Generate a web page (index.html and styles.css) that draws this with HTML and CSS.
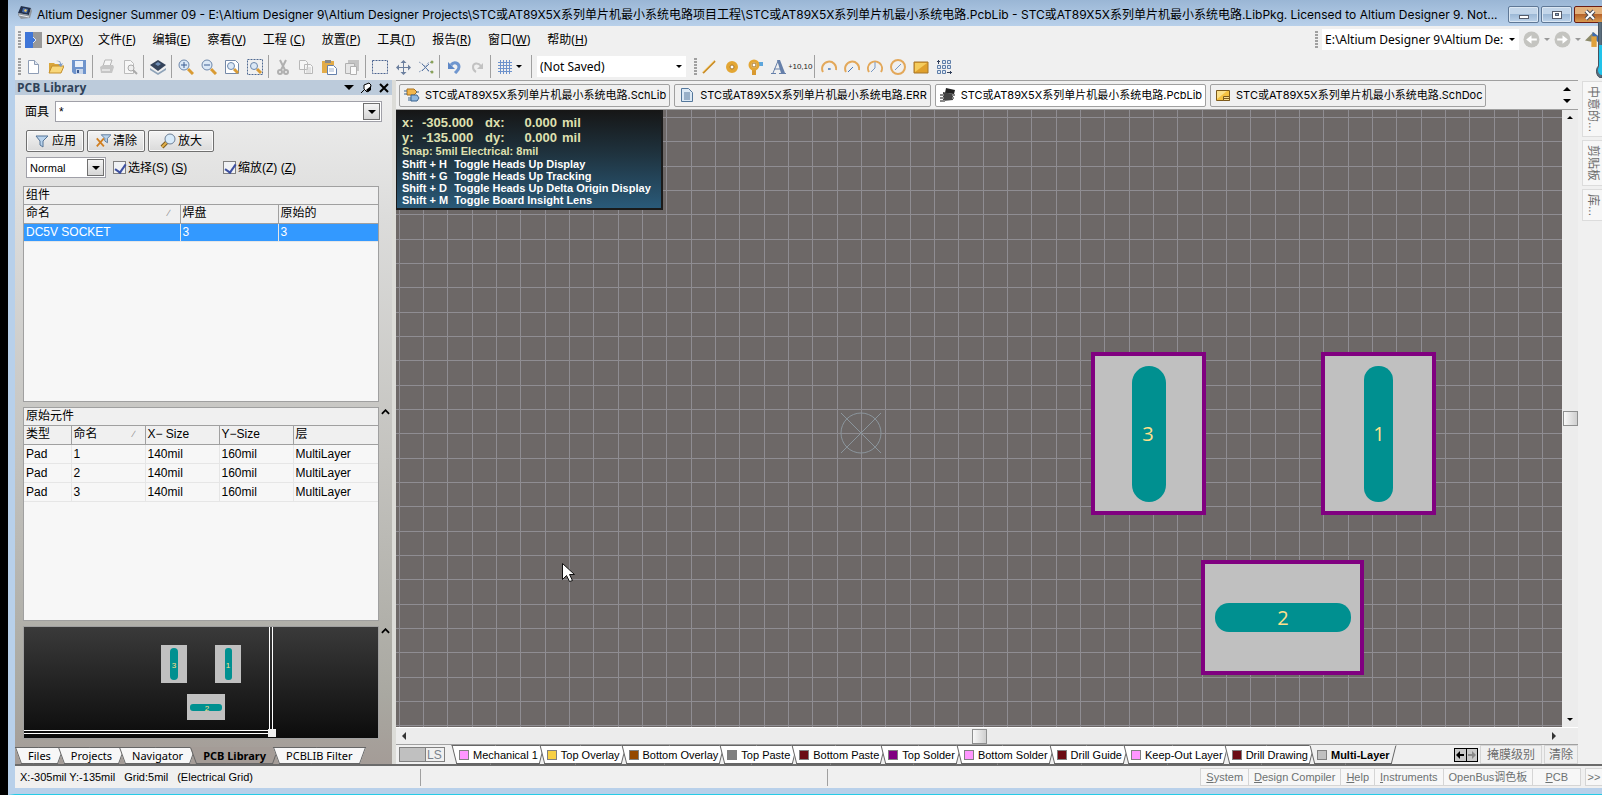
FILE: index.html
```html
<!DOCTYPE html>
<html lang="zh-CN">
<head>
  <meta charset="UTF-8">
  <title>Altium Designer Summer 09</title>
  <link rel="stylesheet" href="styles.css">
</head>
<body>
  <div class="window">
    <header class="titlebar">
      <svg class="app-icon" viewBox="0 0 16 16"><path d="M4 1l10 2-2 7-11-2z" fill="#23304a"/><path d="M6 3l5 1-1 4-5-1z" fill="#4a6fae"/><path d="M8 4l2 1-1 2-2-1z" fill="#f0c860"/><path d="M1 8l11 2 2-7 1 3-2 7-9 1-3-4z" fill="#8f959c"/><path d="M2 10l10 2" stroke="#e8ecf0"/></svg>
      <h1 class="title">Altium Designer Summer 09 - E:\Altium Designer 9\Altium Designer Projects\STC或AT89X5X系列单片机最小系统电路项目工程\STC或AT89X5X系列单片机最小系统电路.PcbLib - STC或AT89X5X系列单片机最小系统电路.LibPkg. Licensed to Altium Designer 9. Not...</h1>
      <div class="window-buttons">
        <button class="win-btn" aria-label="Minimize"><svg viewBox="0 0 16 12"><rect x="3.500" y="6.500" width="9" height="3" fill="#fff" stroke="#555c6b"/></svg></button>
        <button class="win-btn" aria-label="Maximize"><svg viewBox="0 0 16 12"><rect x="3.500" y="2.500" width="9" height="7" fill="#fff" stroke="#555c6b"/><rect x="6.500" y="4.500" width="3" height="2" fill="#8fabc9" stroke="#555c6b"/></svg></button>
        <button class="win-btn close" aria-label="Close"><svg viewBox="0 0 16 12"><path d="M4 2l8 8M12 2l-8 8" stroke="#4a4a55" stroke-width="4"/><path d="M4 2l8 8M12 2l-8 8" stroke="#fff" stroke-width="2"/></svg></button>
      </div>
    </header>

    <div class="menubar">
      <span class="grip"></span>
      <nav class="menu">
        <button class="dxp"><svg viewBox="0 0 17 16"><path d="M0 0h8v5l3 3-3 3v5H0z" fill="#3f76d8"/><path d="M8 0h9v16H8v-5l3-3-3-3z" fill="#999"/><path d="M8 5l3 3-3 3" fill="none" stroke="#dfe6f2"/></svg>DXP<span>(<u>X</u>)</span></button>
        <button>文件(<u>F</u>)</button>
        <button>编辑(<u>E</u>)</button>
        <button>察看(<u>V</u>)</button>
        <button>工程 (<u>C</u>)</button>
        <button>放置(<u>P</u>)</button>
        <button>工具(<u>T</u>)</button>
        <button>报告(<u>R</u>)</button>
        <button>窗口(<u>W</u>)</button>
        <button>帮助(<u>H</u>)</button>
      </nav>
      <div class="pathbar">
        <span class="grip"></span>
        <span class="combo path-combo"><select aria-label="Path"><option>E:\Altium Designer 9\Altium De:</option></select></span>
        <button class="nav-btn" aria-label="Back"><svg viewBox="0 0 16 16"><circle cx="8" cy="8" r="7.500" fill="#c4c4c0"/><path d="M3 8l5-4v3h5v2H8v3z" fill="#fff"/></svg></button>
        <span class="arrow dim"></span>
        <button class="nav-btn" aria-label="Forward"><svg viewBox="0 0 16 16"><circle cx="8" cy="8" r="7.500" fill="#c4c4c0"/><path d="M13 8L8 4v3H3v2h5v3z" fill="#fff"/></svg></button>
        <span class="arrow dim"></span>
        <button class="nav-btn" aria-label="Home"><svg viewBox="0 0 16 16"><path d="M0 9l8-8 3 3-5 6z" fill="#8c8a6a"/><path d="M7 1l9 6-3 4-6-5z" fill="#3c6bb0"/><path d="M6 5h5v10H6z" fill="#e0a23c"/></svg></button>
      </div>
    </div>

    <div class="toolbar">
      <span class="grip"></span>
      <button aria-label="New"><svg viewBox="0 0 16 16"><path d="M3.500 1.500h6l4 4v9h-10z" fill="#fff" stroke="#8e9db5"/><path d="M9.500 1.500v4h4" fill="#dfe7f2" stroke="#8e9db5"/></svg></button>
      <button aria-label="Open"><svg viewBox="0 0 16 16"><path d="M1 4h5l1 1h6v9H1z" fill="#d9a63c"/><path d="M4 7h12l-3 7H1z" fill="#f8d77a" stroke="#c48f2c"/><path d="M8 2c3-1 5 0 5 3l2-1-2 4-3-3h2c0-2-1-3-4-3" fill="#7d9bc4"/></svg></button>
      <button aria-label="Save"><svg viewBox="0 0 16 16"><path d="M1 1h14v14H3l-2-2z" fill="#6f94cc"/><path d="M4 2h8v6H4z" fill="#e9f0fa"/><path d="M5 10h7v5H5z" fill="#c7d5ea"/><path d="M6 11h2v3H6z" fill="#3c5c94"/></svg></button>
      <span class="sep"></span>
      <button aria-label="Print"><svg viewBox="0 0 16 16"><path d="M6 1h7l-2 6H4z" fill="#f6f6f6" stroke="#b5b5b5"/><path d="M1 8l3-2h10l1 2-2 6H2z" fill="#c6c6c6"/><path d="M3 11h8" stroke="#fff"/></svg></button>
      <button aria-label="Print preview"><svg viewBox="0 0 16 16"><path d="M2.500 1.500h6l3 3v10h-9z" fill="#f7f7f7" stroke="#bbb"/><circle cx="9" cy="9" r="3" fill="#eee" stroke="#aaa"/><path d="M11 11l4 4" stroke="#aaa" stroke-width="2"/></svg></button>
      <span class="sep"></span>
      <button aria-label="Board"><svg viewBox="0 0 16 16"><path d="M0 9l8 5 8-5v2l-8 5-8-5z" fill="#8fa3b8"/><path d="M0 6l8-5 8 5-8 6z" fill="#34435a"/><path d="M5 5l3-2 3 2-3 2z" fill="#6f8db4"/></svg></button>
      <span class="sep"></span>
      <button aria-label="Zoom in"><svg viewBox="0 0 16 16"><path d="M10 10l5 5" stroke="#d99b34" stroke-width="3"/><circle cx="6" cy="6" r="5" fill="#dbe8f6" stroke="#6d87ab"/><path d="M3 6h6M6 3v6" stroke="#3d5f93" stroke-width="1"/></svg></button>
      <button aria-label="Zoom out"><svg viewBox="0 0 16 16"><path d="M10 10l5 5" stroke="#d99b34" stroke-width="3"/><circle cx="6" cy="6" r="5" fill="#dbe8f6" stroke="#6d87ab"/><path d="M3 6h6" stroke="#3d5f93"/></svg></button>
      <button aria-label="Fit document"><svg viewBox="0 0 16 16"><path d="M1.500 1.500h10l3 3v10h-13z" fill="#fff" stroke="#7489a8"/><path d="M10 10l4 4" stroke="#d99b34" stroke-width="3"/><circle cx="7" cy="7" r="3.500" fill="#dbe8f6" stroke="#6d87ab"/></svg></button>
      <button aria-label="Fit area"><svg viewBox="0 0 16 16"><path d="M.5.5h15v15H.5z" fill="none" stroke="#506a92" stroke-dasharray="2 1"/><path d="M10 10l4 4" stroke="#d99b34" stroke-width="3"/><circle cx="7" cy="7" r="3.500" fill="#dbe8f6" stroke="#6d87ab"/></svg></button>
      <span class="sep"></span>
      <button aria-label="Cut"><svg viewBox="0 0 16 16"><path d="M5 1l5 10M11 1L6 11" stroke="#b0b0b0" stroke-width="2"/><circle cx="5" cy="13" r="2" fill="none" stroke="#b0b0b0" stroke-width="2"/><circle cx="11" cy="13" r="2" fill="none" stroke="#b0b0b0" stroke-width="2"/></svg></button>
      <button aria-label="Copy"><svg viewBox="0 0 16 16"><path d="M1.500 1.500h6l2 2v7h-8zM6.500 5.500h6l2 2v7h-8z" fill="#f6f6f6" stroke="#b8b8b8"/><path d="M8 9h5M8 11h5M8 13h5" stroke="#ccc"/></svg></button>
      <button aria-label="Paste"><svg viewBox="0 0 16 16"><path d="M1 2h12v12H1z" fill="#e3ac48"/><path d="M4 1h6v3H4z" fill="#8a8a8a"/><path d="M6.500 6.500h6l3 3v6h-9z" fill="#fff" stroke="#6580ab"/><path d="M8 10h5M8 12h5" stroke="#9fb2cf"/></svg></button>
      <button aria-label="Paste special"><svg viewBox="0 0 16 16"><path d="M4 1h11v11H4z" fill="#c4c4c4"/><path d="M1.500 4.500h9v10h-9z" fill="#e6e6e6" stroke="#b0b0b0"/><path d="M6.500 7.500h6v8h-6z" fill="#fafafa" stroke="#b0b0b0"/></svg></button>
      <span class="sep"></span>
      <button aria-label="Select"><svg viewBox="0 0 16 16"><path d="M.5 1.500h15v13H.5z" fill="none" stroke="#4c6490" stroke-dasharray="2 1"/></svg></button>
      <button aria-label="Move"><svg viewBox="0 0 16 16"><path d="M8.500 2v13M2 8.500h13" stroke="#6b7f9e"/><path d="M8.500 1l3 3h-6zM8.500 16l3-3h-6zM1 8.500l3-3v6zM16 8.500l-3-3v6z" fill="#6b7f9e"/></svg></button>
      <button aria-label="Deselect"><svg viewBox="0 0 16 16"><path d="M1 3l5 3 4 6 5 1M1 13l5-3 4-6 5-1" fill="none" stroke="#92a3bd" stroke-dasharray="2 1"/><path d="M4 5l7 7M11 5l-7 7" stroke="#607ba6"/><circle cx="14" cy="3" r="1.500" fill="#8aa25a"/><circle cx="14" cy="13" r="1.500" fill="#8aa25a"/></svg></button>
      <span class="sep"></span>
      <button aria-label="Undo"><svg viewBox="0 0 16 16"><path d="M5 6c3-4 8-2 8 2 0 3-2 4-4 6" fill="none" stroke="#6f96cf" stroke-width="3"/><path d="M2 3v7h7z" fill="#5d87c6"/></svg></button>
      <button aria-label="Redo"><svg viewBox="0 0 16 16"><path d="M12 7C9 3 4 4 4 8c0 3 1 4 3 5" fill="none" stroke="#c2c2c2" stroke-width="2"/><path d="M14 4v6H8z" fill="#c2c2c2"/></svg></button>
      <span class="sep"></span>
      <button aria-label="Grid"><svg viewBox="0 0 16 16"><path d="M3.500 1v14M6.500 1v14M9.500 1v14M12.500 1v14M1 3.500h14M1 6.500h14M1 9.500h14M1 12.500h14" stroke="#6d92cc"/></svg></button>
      <span class="arrow"></span>
      <span class="sep wide"></span>
      <span class="combo variant-combo"><select aria-label="Variant"><option>(Not Saved)</option></select></span>
      <span class="grip"></span>
      <button aria-label="Line"><svg viewBox="0 0 16 16"><path d="M2 14L14 2" stroke="#c88b28" stroke-width="2"/><path d="M2 13L13 2" stroke="#f3c765"/></svg></button>
      <button aria-label="Pad"><svg viewBox="0 0 16 16"><circle cx="8" cy="8" r="4" fill="#fff" stroke="#e3a634" stroke-width="4"/><circle cx="8" cy="8" r="2" fill="#fff" stroke="#a87420"/></svg></button>
      <button aria-label="Via"><svg viewBox="0 0 16 16"><path d="M10 3h6v4h-6z" fill="#5da6dc"/><path d="M5 9h4v7H5z" fill="#d89930"/><circle cx="7" cy="6" r="4" fill="#fff" stroke="#e3a634" stroke-width="3"/><circle cx="7" cy="6" r="2" fill="none" stroke="#a87420"/></svg></button>
      <button aria-label="String"><svg viewBox="0 0 16 16"><path d="M1 14.500h5M9 14.500h7M3 14L8 2M4 10h6" stroke="#6680aa" stroke-width="1" fill="none"/><path d="M7 1h3l5 13h-4z" fill="#6680aa"/></svg></button>
      <button class="coord" aria-label="Coordinate"><sub>+</sub>10,10</button>
      <span class="sep"></span>
      <button aria-label="Arc by centre"><svg viewBox="0 0 16 16"><path d="M2 13A7 7 0 1 1 15 11" fill="none" stroke="#e3a85a" stroke-width="2"/><path d="M7 10h3M8 9v2" stroke="#4577b8"/></svg></button>
      <button aria-label="Arc by edge"><svg viewBox="0 0 16 16"><path d="M2 13A7 7 0 1 1 15 11" fill="none" stroke="#e3a85a" stroke-width="2"/><path d="M4 13l5-5" stroke="#4577b8"/></svg></button>
      <button aria-label="Arc any angle"><svg viewBox="0 0 16 16"><path d="M2 13A7 7 0 1 1 14 13" fill="none" stroke="#e3a85a" stroke-width="2"/><path d="M8 3v6l-4 4" fill="none" stroke="#7798c4"/></svg></button>
      <button aria-label="Full circle"><svg viewBox="0 0 16 16"><circle cx="8" cy="8" r="7" fill="none" stroke="#e3a85a" stroke-width="2"/><path d="M5 11l6-6" stroke="#7798c4"/></svg></button>
      <button aria-label="Fill"><svg viewBox="0 0 16 16"><path d="M1 3h14v11H1z" fill="#e0a02c" stroke="#a6762a"/><path d="M2 4h12L2 13z" fill="#f5cc5c"/></svg></button>
      <button aria-label="Array"><svg viewBox="0 0 16 16"><path d="M6.500 1.500h3v3h-3zM11.500 1.500h3v3h-3zM6.500 6.500h3v3h-3zM11.500 6.500h3v3h-3zM1.500 11.500h3v3h-3zM6.500 11.500h3v3h-3zM1.500 6.500h3v3h-3z" fill="#dfe9f5" stroke="#5f7ea9"/><path d="M2.500 5V1M1 2.500h3M11 13.500h5M14.500 12v3" stroke="#33415c"/></svg></button>
    </div>

    <div class="workspace">
      <aside class="panel">
        <div class="panel-title">
          <h2>PCB Library</h2>
          <span class="arrow big"></span>
          <button aria-label="Pin"><svg viewBox="0 0 12 12"><path d="M1 11l4-4" stroke="#000"/><path d="M4 3l5-2 2 2-1 5-3 2-3-3z" fill="#fff" stroke="#000"/><path d="M6 8l5-4v4l-3 2z"/></svg></button>
          <button aria-label="Close panel"><svg viewBox="0 0 12 12"><path d="M2 2l8 8M10 2l-8 8" stroke="#000" stroke-width="2"/></svg></button>
        </div>
        <div class="panel-body">
          <div class="mask-row">
            <label for="mask">面具</label>
            <span class="mask-box"><input id="mask" type="text" value="*"><button class="drop" aria-label="Mask history"><span class="arrow"></span></button></span>
          </div>
          <div class="button-row">
            <button class="push"><svg viewBox="0 0 16 16"><path d="M2 3h12l-5 5v6l-3-2V8z" fill="#b9d3ec" stroke="#557497"/></svg>应用</button>
            <button class="push clear"><svg viewBox="0 0 18 16"><path d="M7 1h11l-4 4v5l-3-2V5z" fill="#b9d3ec" stroke="#557497"/><path d="M2 5l8 9M10 5l-8 9" stroke="#d07f22" stroke-width="2"/></svg>清除</button>
            <button class="push magnify"><svg viewBox="0 0 16 16"><path d="M7 9l-5 5" stroke="#7d5c22" stroke-width="4"/><path d="M7 9l-5 5" stroke="#e2b04a" stroke-width="2"/><circle cx="10" cy="6" r="5" fill="#d8ebfa" stroke="#6d7f96"/></svg>放大</button>
          </div>
          <div class="option-row">
            <span class="mode-box"><select aria-label="Mode"><option>Normal</option></select><span class="drop"><span class="arrow"></span></span></span>
            <label class="check"><input type="checkbox" checked>选择(S) (<u>S</u>)</label>
            <label class="check"><input type="checkbox" checked>缩放(Z) (<u>Z</u>)</label>
          </div>

          <div class="list">
            <table class="components">
              <caption>组件</caption>
              <thead><tr><th class="sorted">命名</th><th>焊盘</th><th>原始的</th></tr></thead>
              <tbody><tr class="selected"><td>DC5V SOCKET</td><td>3</td><td>3</td></tr></tbody>
            </table>
          </div>

          <div class="list-row">
            <div class="list">
              <table class="primitives">
                <caption>原始元件</caption>
                <thead><tr><th>类型</th><th class="sorted">命名</th><th>X− Size</th><th>Y−Size</th><th>层</th></tr></thead>
                <tbody>
                  <tr><td>Pad</td><td>1</td><td>140mil</td><td>160mil</td><td>MultiLayer</td></tr>
                  <tr><td>Pad</td><td>2</td><td>140mil</td><td>160mil</td><td>MultiLayer</td></tr>
                  <tr><td>Pad</td><td>3</td><td>140mil</td><td>160mil</td><td>MultiLayer</td></tr>
                </tbody>
              </table>
            </div>
            <button class="collapse" aria-label="Collapse"><svg viewBox="0 0 10 6"><path d="M1 5l4-4 4 4" fill="none" stroke="#000" stroke-width="2"/></svg></button>
          </div>

          <div class="preview-row">
            <svg class="preview" viewBox="0 0 354 111" preserveAspectRatio="none">
              <g fill="#c0c0c0"><rect x="137" y="18" width="26" height="38"/><rect x="191" y="18" width="26" height="38"/><rect x="163" y="67" width="38" height="26"/></g>
              <g fill="#009090"><rect x="146" y="21" width="8" height="32" rx="4"/><rect x="201" y="21" width="7" height="32" rx="3"/><rect x="166" y="77" width="32" height="7" rx="3"/></g>
              <g class="preview-num"><text x="150" y="41">3</text><text x="204" y="41">1</text><text x="183" y="84">2</text></g>
              <path d="M245.500 0v106M248.500 0v106M0 103.500h246M0 106.500h246" stroke="#fff"/>
              <rect x="244" y="102" width="8" height="8" fill="#f0f0f0"/>
            </svg>
            <button class="collapse" aria-label="Collapse"><svg viewBox="0 0 10 6"><path d="M1 5l4-4 4 4" fill="none" stroke="#000" stroke-width="2"/></svg></button>
          </div>
        </div>
        <div class="panel-tabs">
          <button class="slant">Files</button>
          <button class="slant">Projects</button>
          <button class="slant">Navigator</button>
          <button class="slant active">PCB Library</button>
          <button class="slant">PCBLIB Filter</button>
        </div>
      </aside>

      <main class="editor">
        <div class="doc-tabs">
          <button class="doc-tab"><svg viewBox="0 0 16 16"><path d="M3 2h7l3 3-3 3H3z" fill="#f1b64c" stroke="#a8701c"/><path d="M7 8h6l2 3-2 3H7z" fill="#8fb8e0" stroke="#3b648f"/><path d="M0 4h3M0 7h3M12 5h3M4 11h3M4 13h3" stroke="#3b648f"/></svg>STC或AT89X5X系列单片机最小系统电路.SchLib</button>
          <button class="doc-tab"><svg viewBox="0 0 16 16"><path d="M2.500 1.500h7l4 4v9h-11z" fill="#dce9f5" stroke="#54779b"/><path d="M5 6h6M5 8h6M5 10h6M5 12h6" stroke="#54779b"/></svg>STC或AT89X5X系列单片机最小系统电路.ERR</button>
          <button class="doc-tab active"><svg viewBox="0 0 16 16"><path d="M6 1l9 2-1 4-9-1z" fill="#222"/><path d="M3 5l10 2v6l-10 1z" fill="#444"/><path d="M0 8h4M0 11h4M0 14h5M12 8h3M12 11h2" stroke="#888" stroke-width="2"/></svg>STC或AT89X5X系列单片机最小系统电路.PcbLib</button>
          <button class="doc-tab"><svg viewBox="0 0 16 16"><path d="M1.500 3.500h13v10h-13z" fill="#f5c243" stroke="#7c5a1c"/><path d="M2 4h10L2 12z" fill="#fbe08a"/><path d="M8.500 9.500h6v4h-6zM8.500 11.500h6" fill="#f8dc90" stroke="#7c5a1c"/></svg>STC或AT89X5X系列单片机最小系统电路.SchDoc</button>
          <div class="tab-scroll"><span class="arrow up"></span><span class="arrow big"></span></div>
        </div>

        <div class="canvas-area">
          <div class="canvas">
            <svg class="board" aria-label="PCB footprint">
              <defs>
                <pattern id="grid" x="3" y="7" width="73" height="73" patternUnits="userSpaceOnUse">
                  <path d="M.5 0v73M24.500 0v73M48.500 0v73M0 .5h73M0 24.500h73M0 49.500h73" stroke="#8f8d92"/>
                </pattern>
              </defs>
              <rect width="100%" height="100%" fill="url(#grid)"/>
              <g fill="none" stroke="#8b959c"><circle cx="465" cy="323" r="20"/><path d="M445 303l40 40M485 303l-40 40"/></g>
              <g class="pads">
                <rect x="697" y="244" width="111" height="159"/>
                <rect x="927" y="244" width="111" height="159"/>
                <rect x="807" y="452" width="159" height="111"/>
              </g>
              <g fill="#009090">
                <rect x="736" y="256" width="34" height="136" rx="17"/>
                <rect x="968" y="256" width="29" height="136" rx="14"/>
                <rect x="819" y="493" width="136" height="29" rx="14"/>
              </g>
              <g class="pad-num"><text x="752" y="331">3</text><text x="983" y="331">1</text><text x="887" y="515">2</text></g>
              <path d="M166.500 453.500v16l4-4 3 6 3-1-3-6h5z" fill="#fff" stroke="#111"/>
            </svg>
            <div class="hud">
              <div class="hud-pos">
                <span>x:</span><span>-305.000</span><span>dx:</span><span class="num">0.000</span><span>mil</span>
                <span>y:</span><span>-135.000</span><span>dy:</span><span class="num">0.000</span><span>mil</span>
              </div>
              <div class="hud-snap">Snap: 5mil Electrical: 8mil</div>
              <div class="hud-keys">
                <span>Shift + H</span><span>Toggle Heads Up Display</span>
                <span>Shift + G</span><span>Toggle Heads Up Tracking</span>
                <span>Shift + D</span><span>Toggle Heads Up Delta Origin Display</span>
                <span>Shift + M</span><span>Toggle Board Insight Lens</span>
              </div>
            </div>
          </div>
          <div class="vscroll"><span class="arrow up small"></span><span class="thumb"></span><span class="arrow small"></span></div>
        </div>
        <div class="hscroll"><span class="arrow left"></span><span class="thumb"></span><span class="arrow right"></span></div>

        <div class="layers">
          <div class="layer-set"><span class="ls-swatch"></span><span>LS</span></div>
          <div class="layer-tabs">
            <button class="slant"><i class="pink"></i>Mechanical 1</button>
            <button class="slant"><i class="yellow"></i>Top Overlay</button>
            <button class="slant"><i class="brown"></i>Bottom Overlay</button>
            <button class="slant"><i class="gray"></i>Top Paste</button>
            <button class="slant"><i class="maroon"></i>Bottom Paste</button>
            <button class="slant"><i class="purple"></i>Top Solder</button>
            <button class="slant"><i class="pink"></i>Bottom Solder</button>
            <button class="slant"><i class="maroon"></i>Drill Guide</button>
            <button class="slant"><i class="pink"></i>Keep-Out Layer</button>
            <button class="slant"><i class="maroon"></i>Drill Drawing</button>
            <button class="slant active"><i class="silver"></i>Multi-Layer</button>
          </div>
          <div class="layer-tools">
            <span class="layer-move"><button aria-label="Previous layers"><svg viewBox="0 0 10 10"><path d="M1 5l4-4v3h4v2H5v3z"/></svg></button><button aria-label="Next layers"><svg viewBox="0 0 10 10"><path d="M9 5L5 1v3H1v2h4v3z" fill="#888"/></svg></button></span>
            <button class="flat">掩膜级别</button>
            <button class="flat">清除</button>
          </div>
        </div>
      </main>

      <aside class="side-dock">
        <button>中意的...</button>
        <button>剪贴板</button>
        <button>库...</button>
      </aside>
    </div>

    <footer class="statusbar">
      <div class="status-text"><span>X:-305mil Y:-135mil</span><span>Grid:5mil</span><span>(Electrical Grid)</span></div>
      <div class="status-fill"></div>
      <div class="status-buttons">
        <button><u>S</u>ystem</button>
        <button><u>D</u>esign Compiler</button>
        <button><u>H</u>elp</button>
        <button><u>I</u>nstruments</button>
        <button>OpenBus调色板</button>
        <button><u>P</u>CB</button>
      </div>
      <button class="more">&gt;&gt;</button>
    </footer>
  </div>
  <svg class="edge-widget" viewBox="0 0 6 56"><path d="M2.500 0H6v56c-6 0-7-9-3.500-12z" fill="#5b6f7e" stroke="#46525e"/><path d="M3 23h3v30c-4 0-5-6-3-8z" fill="#22c3ea"/></svg>
</body>
</html>
```
FILE: styles.css
```css
* {
  box-sizing: border-box;
}

body {
  margin: 0;
  background: #000;
  color: #000;
  font-family: "Liberation Sans", "Noto Sans CJK SC", sans-serif;
  font-size: 12px;
  line-height: 16px;
  overflow: hidden;
}

button,
input,
select {
  font: inherit;
  color: inherit;
  margin: 0;
  padding: 0;
  border: 0;
  border-radius: 0;
  background: none;
}

button {
  display: flex;
  align-items: center;
  justify-content: center;
  white-space: nowrap;
  flex-shrink: 0;
}

svg {
  display: block;
  flex-shrink: 0;
}

.window {
  display: flex;
  flex-direction: column;
  height: 100vh;
  margin-left: 8px;
  background: #f0f0f0;
  border-left: 7px solid #b8d0ea;
  border-bottom: 1px solid #26cbe6;
}

/* title bar */

.titlebar {
  display: flex;
  align-items: center;
  height: 26px;
  margin-left: -7px;
  padding-left: 9px;
  background: linear-gradient(#9ab6d5, #b8d0ea);
}

.app-icon {
  width: 16px;
  height: 16px;
}

.title {
  flex: 1;
  min-width: 0;
  margin: 3px 0 0 4px;
  font-family: Inter, "Noto Sans CJK SC", sans-serif;
  font-size: 12px;
  font-weight: 400;
  white-space: nowrap;
  overflow: hidden;
}

.window-buttons {
  display: flex;
  gap: 2px;
  width: 94px;
  margin-top: 3px;
  overflow: hidden;
}

.win-btn {
  width: 31px;
  height: 17px;
  border: 1px solid #5f7896;
  border-radius: 2px;
  background: linear-gradient(#c3d6ea 45%, #9db9d6 50%, #bdd3ea);
  box-shadow: inset 0 0 0 1px #dbe7f3;
}

.win-btn svg {
  width: 16px;
  height: 12px;
}

.win-btn.close {
  border-color: #6b1c14;
  background: linear-gradient(#e3b17c 45%, #b5632a 50%, #d89a50);
  box-shadow: none;
}

/* menu */

.menubar {
  display: flex;
  align-items: center;
  height: 27px;
  padding-left: 3px;
  font-family: "Noto Sans", "Noto Sans CJK SC", sans-serif;
}

.grip {
  width: 3px;
  height: 18px;
  flex-shrink: 0;
  background: repeating-linear-gradient(#a0a0a0 0 2px, transparent 2px 3px);
}

.menu {
  display: flex;
  flex: 1;
  gap: 17px;
  padding-left: 4px;
}

.menu .dxp {
  margin-right: -2px;
}

.dxp svg {
  width: 17px;
  height: 16px;
  margin-right: 4px;
}

.pathbar {
  display: flex;
  align-items: center;
  width: 287px;
  gap: 4px;
  overflow: hidden;
}

.combo {
  display: flex;
  align-items: center;
  position: relative;
  height: 21px;
  background: #fff;
}

.combo select {
  width: 100%;
  height: 100%;
  padding-left: 3px;
  appearance: none;
}

.combo::after {
  content: "";
  position: absolute;
  right: 4px;
  border: 3px solid transparent;
  border-top-color: #000;
  border-bottom: 0;
}

.path-combo {
  width: 197px;
}

.arrow {
  width: 0;
  flex-shrink: 0;
  border: 3px solid transparent;
  border-top-color: #000;
  border-bottom: 0;
}

.arrow.dim {
  border-top-color: #999;
}

.arrow.big {
  border-width: 5px 5px 0;
}

.arrow.up {
  border: 4px solid transparent;
  border-bottom-color: #000;
  border-top: 0;
}

.arrow.left {
  border: 4px solid transparent;
  border-right-color: #333;
  border-left: 0;
}

.arrow.right {
  border: 4px solid transparent;
  border-left-color: #333;
  border-right: 0;
}

.nav-btn svg {
  width: 17px;
  height: 17px;
}

/* toolbar */

.toolbar {
  display: flex;
  align-items: center;
  height: 27px;
  padding-left: 3px;
  font-family: "Noto Sans", "Noto Sans CJK SC", sans-serif;
}

.toolbar button {
  width: 23px;
  height: 22px;
}

.toolbar svg {
  width: 16px;
  height: 16px;
}

.toolbar .coord {
  font-family: "Liberation Sans", sans-serif;
  font-size: 8px;
  color: #222;
}

.sep {
  width: 1px;
  height: 23px;
  margin: 0 2px;
  background: #a0a0a0;
}

.sep.wide {
  margin-left: 9px;
  margin-right: 4px;
}

.variant-combo {
  width: 149px;
  margin: 0 8px 0 1px;
}

/* workspace */

.workspace {
  display: flex;
  flex: 1;
  min-height: 0;
}

.panel {
  display: flex;
  flex-direction: column;
  width: 381px;
  border-right: 4px solid #dcdcd8;
  background: linear-gradient(#f0f0f0, #dcdcdb 20%, #c4c3bf 55%, #a9a8a1 90%, #a49c97);
}

.panel-title {
  display: flex;
  align-items: center;
  gap: 6px;
  height: 15px;
  padding: 0 2px;
  background: #bccbdb;
}

.panel-title h2 {
  flex: 1;
  margin: 0;
  font-family: "Open Sans", sans-serif;
  font-size: 12px;
  color: #2f4258;
}

.panel-title svg {
  width: 12px;
  height: 12px;
}

.panel-body {
  display: flex;
  flex-direction: column;
  flex: 1;
  min-height: 0;
  padding: 6px 0 8px 8px;
}

.mask-row {
  display: flex;
  align-items: center;
  gap: 6px;
  padding: 0 10px 0 2px;
}

.mask-box {
  display: flex;
  flex: 1;
  height: 21px;
  padding: 1px;
  border: 1px solid #a0a0a8;
  background: #fff;
}

.mask-box input {
  flex: 1;
  padding-left: 2px;
}

.drop {
  display: flex;
  align-items: center;
  justify-content: center;
  width: 17px;
  border: 1px solid #707070;
  background: linear-gradient(#f5f5f5, #d6d6d6);
}

.drop .arrow {
  border-width: 4px 4px 0;
}

.button-row {
  display: flex;
  gap: 3px;
  margin: 8px 0 5px 3px;
}

.push {
  gap: 2px;
  width: 58px;
  height: 22px;
  border: 1px solid #707070;
  border-radius: 2px;
  background: linear-gradient(#f4f4f4, #dadada);
  box-shadow: inset 0 0 0 1px #fafafa;
}

.push svg {
  width: 16px;
  height: 16px;
}

.push.magnify {
  width: 66px;
}

.option-row {
  display: flex;
  align-items: center;
  padding-left: 3px;
}

.mode-box {
  display: flex;
  position: relative;
  width: 80px;
  height: 21px;
  margin-right: 7px;
  padding: 1px;
  border: 1px solid #a0a0a8;
  background: #fff;
  font-size: 11px;
}

.mode-box select {
  flex: 1;
  padding-left: 2px;
  appearance: none;
}

.check {
  display: flex;
  align-items: center;
  white-space: nowrap;
  width: 110px;
}

.check input {
  position: relative;
  width: 13px;
  height: 13px;
  margin-right: 2px;
  border: 1px solid #808080;
  background: #f0f2f5;
  appearance: none;
}

.check input:checked::after {
  content: "";
  position: absolute;
  left: 3px;
  top: 0;
  width: 5px;
  height: 9px;
  border: solid #3c4fa0;
  border-width: 0 2px 2px 0;
  transform: rotate(35deg);
}

.list {
  flex: 1;
  border: 1px solid #a0a0a0;
  background: #f7f7f7;
}

.option-row + .list {
  flex: 1 1 0;
  margin: 8px 13px 5px 0;
}

.list-row {
  display: flex;
  flex: 1 1 0;
}

.collapse {
  align-self: flex-start;
  width: 13px;
  height: 10px;
}

.collapse svg {
  width: 9px;
  height: 6px;
}

table {
  width: 100%;
  table-layout: fixed;
  border-collapse: collapse;
}

caption,
th {
  height: 18px;
  padding: 0 2px;
  text-align: left;
  font-weight: 400;
  line-height: 17px;
  background: #f0f0f0;
  border-bottom: 1px solid #a0a0a0;
  white-space: nowrap;
}

th + th {
  border-left: 1px solid #a0a0a0;
}

td {
  height: 19px;
  padding: 0 2px;
  border-bottom: 1px solid #e6e6e6;
}

td + td {
  border-left: 1px solid #e6e6e6;
}

.selected td {
  height: 18px;
  color: #fff;
  background: #3399ff;
}

.components th:nth-child(1) {
  width: 156px;
}

.components th:nth-child(2) {
  width: 98px;
}

.primitives th {
  width: 74px;
}

.primitives th:nth-child(1) {
  width: 47px;
}

.primitives th:nth-child(5) {
  width: auto;
}

.sorted::after {
  content: "∕";
  float: right;
  margin-right: 8px;
  font-size: 9px;
  color: #888;
}

.preview-row {
  display: flex;
  height: 113px;
  margin-top: 5px;
}

.preview {
  flex: 1;
  border: 1px solid #a0a0a0;
  background: linear-gradient(#3a3a3a, #0c0c0c);
}

.preview-num {
  fill: #ffe08c;
  font-size: 8px;
  text-anchor: middle;
}

/* slanted tabs, wider at the top */

.slant {
  position: relative;
  z-index: 0;
}

.slant::before,
.slant::after {
  content: "";
  position: absolute;
  z-index: -1;
  top: 0;
  bottom: 0;
  width: 55%;
  background: #f7f7f7;
  border: 1px solid #666;
}

.slant::before {
  left: 0;
  border-right: 0;
  transform: skewX(14deg);
}

.slant::after {
  right: 0;
  border-left: 0;
  transform: skewX(-14deg);
}

.panel-tabs {
  display: flex;
  height: 17px;
  padding-left: 3px;
  font-family: "Noto Sans", sans-serif;
  font-size: 11px;
}

.panel-tabs .slant {
  padding: 0 10px;
}

.panel-tabs .slant::before {
  transform: skewX(20deg);
}

.panel-tabs .slant::after {
  transform: skewX(-20deg);
}

.panel-tabs .active {
  font-weight: 700;
}

.panel-tabs .active::before,
.panel-tabs .active::after {
  background: #a49c97;
  border-top-color: #a49c97;
}

/* editor */

.editor {
  display: flex;
  flex-direction: column;
  flex: 1;
  min-width: 0;
}

.doc-tabs {
  display: flex;
  align-items: center;
  gap: 4px;
  height: 30px;
  padding-left: 3px;
  border-top: 1px solid #a0a0a0;
  border-bottom: 1px solid #a0a0a0;
  font-family: Inter, "Noto Sans CJK SC", sans-serif;
  font-size: 11px;
}

.doc-tab {
  gap: 5px;
  height: 23px;
  padding: 0 3px 0 4px;
  border: 1px solid #a0a0a0;
  border-radius: 2px;
}

.doc-tab svg {
  width: 16px;
  height: 16px;
}

.doc-tab.active {
  background: #fff;
}

.tab-scroll {
  display: flex;
  flex-direction: column;
  align-items: center;
  gap: 8px;
  margin-left: auto;
  padding-right: 7px;
}

.tab-scroll .arrow {
  border-left-width: 4px;
  border-right-width: 4px;
}

.tab-scroll .big {
  border-top-width: 4px;
}

.canvas-area {
  display: flex;
  flex: 1;
  min-height: 0;
}

.canvas {
  position: relative;
  flex: 1;
  background: #6d6867;
  overflow: hidden;
}

.board {
  width: 100%;
  height: 100%;
}

.pads rect {
  fill: #c0c0c0;
  stroke: #800080;
  stroke-width: 4px;
}

.pad-num {
  fill: #ffe08c;
  font-family: "Open Sans", sans-serif;
  font-size: 20px;
  text-anchor: middle;
}

.hud {
  position: absolute;
  left: 0;
  top: 0;
  padding: 5px 10px 2px 5px;
  border: solid #1a1a1a;
  border-width: 0 2px 2px 1px;
  background: linear-gradient(#161616, #1f333f 45%, #2a5a79);
  color: #fff;
  font-size: 11px;
  font-weight: 700;
  line-height: 12px;
  white-space: nowrap;
}

.hud-pos {
  display: grid;
  grid-template-columns: 20px 63px 33px 39px 25px;
  line-height: 15px;
  font-size: 13px;
  color: #dfe0b0;
}

.hud-pos .num {
  text-align: right;
}

.hud-pos span:nth-child(5n) {
  padding-left: 5px;
}

.hud-snap {
  line-height: 13px;
  color: #dfe0b0;
}

.hud-keys {
  display: grid;
  grid-template-columns: auto auto;
  column-gap: 6px;
}

.vscroll,
.hscroll {
  display: flex;
  align-items: center;
  background: #ececec;
}

.vscroll {
  flex-direction: column;
  justify-content: space-between;
  width: 16px;
  padding: 6px 0;
}

.vscroll .arrow {
  border-left-width: 3px;
  border-right-width: 3px;
}

.vscroll .up {
  border-bottom-width: 3px;
}

.hscroll {
  justify-content: space-between;
  height: 17px;
  padding: 0 22px 0 6px;
  border-top: 1px solid #fff;
}

.thumb {
  width: 15px;
  height: 15px;
  border: 1px solid #8e8f8f;
  background: linear-gradient(90deg, #f8f8f8, #cfcfcf);
}

/* layer tabs */

.layers {
  display: flex;
  align-items: center;
  height: 20px;
  border-top: 1px solid #a0a0a0;
}

.layer-set {
  display: flex;
  width: 46px;
  height: 15px;
  margin: 0 9px 0 3px;
  border: 1px solid #808080;
  color: #7a828c;
  line-height: 14px;
}

.ls-swatch {
  width: 26px;
  margin-right: 1px;
  flex-shrink: 0;
  border-right: 1px solid #808080;
  background: #c0c0c0;
}

.layer-tabs {
  display: flex;
  height: 20px;
  font-size: 11px;
}

.layer-tabs .slant {
  padding: 0 4px 0 5px;
}

.layer-tabs .slant::before,
.layer-tabs .slant::after {
  background: #fff;
  border-bottom-width: 2px;
}

.layer-tabs .active::before,
.layer-tabs .active::after {
  background: #f0f0f0;
  border-top-color: #f0f0f0;
}

.layer-tabs .active {
  font-weight: 700;
}

.layer-tabs i {
  width: 10px;
  height: 10px;
  margin-right: 4px;
  border: 1px solid #808080;
}

.pink { background: #ff96ff; }
.yellow { background: #f7d046; }
.brown { background: #954800; }
.gray { background: #808080; }
.maroon { background: #6b0c14; }
.purple { background: #800080; }
.silver { background: #c0c0c0; }

.layer-tools {
  display: flex;
  align-items: center;
  gap: 2px;
  margin-left: auto;
}

.layer-move {
  display: flex;
  border: 1px solid #000;
}

.layer-move button {
  width: 11px;
  height: 12px;
  background: #c8c8c8;
}

.layer-move button + button {
  border-left: 1px solid #000;
}

.layer-move svg {
  width: 10px;
  height: 10px;
}

.flat {
  height: 19px;
  padding: 0 4px;
  border: 1px solid #d5d5d5;
  color: #6d6d6d;
}

.flat:nth-of-type(1) {
  padding: 0 6px;
}

/* right dock */

.side-dock {
  display: flex;
  flex-direction: column;
  gap: 3px;
  width: 24px;
  padding: 1px 0 0 4px;
}

.side-dock button {
  writing-mode: vertical-rl;
  text-orientation: sideways;
  justify-content: flex-start;
  padding: 4px 0;
  border: 1px solid #dcdcdc;
  border-right: 0;
  background: #f7f7f7;
  color: #6d6d6d;
}

/* status bar */

.statusbar {
  display: flex;
  align-items: center;
  height: 30px;
  border-top: 2px solid #6b6b6b;
  border-bottom: 6px solid #b8d0ea;
  font-size: 11px;
}

.status-text {
  display: flex;
  gap: 9px;
  width: 405px;
  padding-left: 5px;
}

.status-fill {
  flex: 1;
  height: 17px;
  border-left: 1px solid #a0a0a0;
  background: linear-gradient(#a0a0a0, #a0a0a0) 406px 0 / 1px 100% no-repeat;
}

.status-buttons {
  display: flex;
}

.status-buttons button,
.more {
  height: 18px;
  padding: 0 5px;
  border: 1px solid #d5d5d5;
  background: #f7f7f7;
  color: #6d7272;
}

.status-buttons button + button {
  border-left: 0;
}

.status-buttons button:last-child {
  padding: 0 12px;
}

.more {
  width: 17px;
  margin-left: 4px;
  border-right: 0;
}

/* gauge hanging over the right edge */

.edge-widget {
  position: absolute;
  right: 0;
  top: 22px;
  width: 6px;
  height: 56px;
}
```
